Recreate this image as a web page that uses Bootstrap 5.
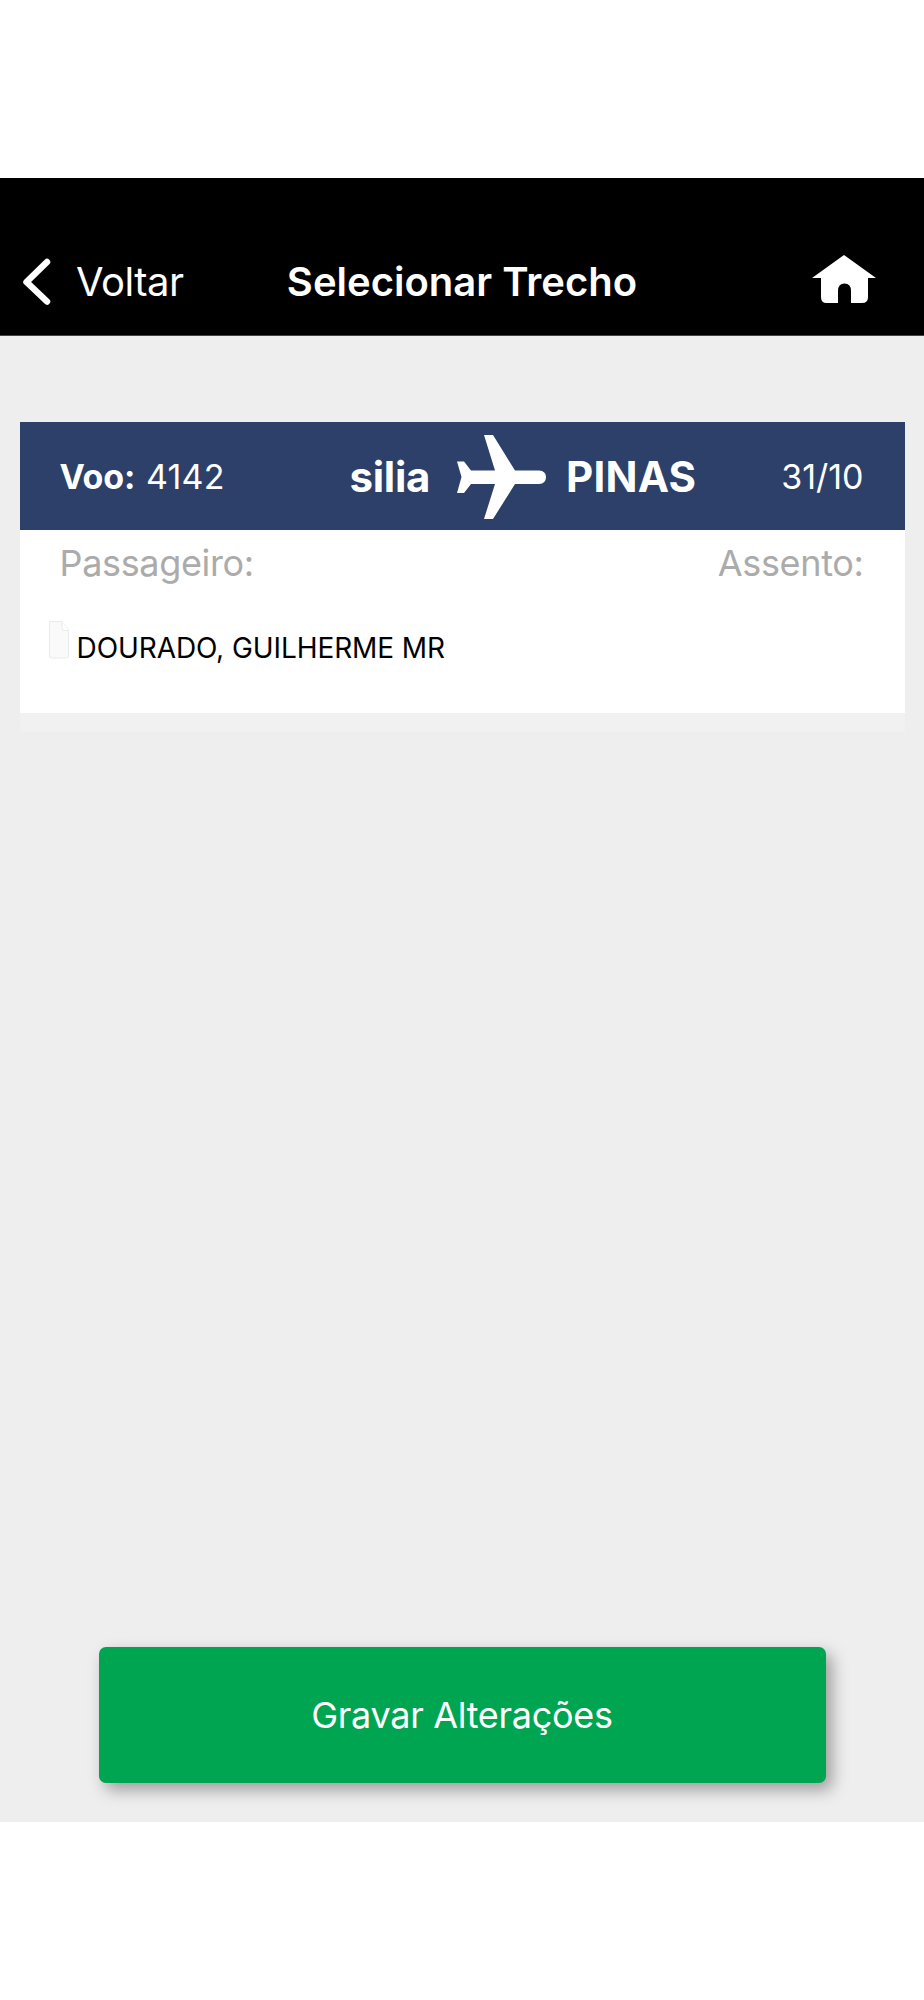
<!DOCTYPE html>
<html lang="pt-BR">
<head>
<meta charset="utf-8">
<meta name="viewport" content="width=device-width, initial-scale=1">
<title>Selecionar Trecho</title>
<link href="https://cdn.jsdelivr.net/npm/bootstrap@5.3.0/dist/css/bootstrap.min.css" rel="stylesheet">
<style>
body{font-family:Inter,"Liberation Sans",sans-serif;background:#fff;line-height:1}
.app-screen{margin-top:178px;height:1644px;background:#eee}
.app-bar{height:158px;background:#000;border-bottom:1px solid #444;padding-top:50px}
.app-bar .bar-row{height:107px}
.bar-side{width:287px}
.back-link{font-size:40px;gap:25px;letter-spacing:-.5px;padding-left:22px}
.home-link{padding:0 48px 6px 0}
.bar-title{font-size:40px;font-weight:600;white-space:nowrap}
.flight-card{margin:86px 19.5px 0;height:310px;background:#f1f1f1}
.flight-head{height:108px;background:#2c4069;padding:1px 41px 0 40px;font-size:34px}
.flight-no{width:290px;gap:11px}
.flight-no b{letter-spacing:-.2px}
.flight-no span{letter-spacing:.2px}
.route{font-size:42px;font-weight:700}
.route-from{letter-spacing:-.3px}
.route-to{letter-spacing:.2px}
.route svg{margin:0 20px 0 27px}
.flight-body{height:183px;background:#fff;padding:15px 41px 0 29px}
.labels{font-size:36px;line-height:37px;letter-spacing:-.35px;color:#ababab;padding-left:11px}
.passenger{margin-top:39px;color:#000;font-size:28px;letter-spacing:-.08px;gap:7px}
.passenger span{padding-top:13px}
.save-btn{--bs-btn-border-radius:7px;width:727px;height:136px;margin-bottom:39px;background:#00a551;color:#fff;border:0;font-size:36px;letter-spacing:-.3px;box-shadow:6px 7px 16px rgba(0,0,0,.34)}
</style>
</head>
<body>
<main class="app-screen d-flex flex-column">
  <header class="app-bar text-white">
    <div class="bar-row d-flex align-items-center justify-content-between">
      <a class="bar-side back-link d-flex align-items-center text-white text-decoration-none" href="#">
        <svg width="29" height="48" viewBox="0 0 29 48" fill="none" stroke="#fff" stroke-width="6.500" stroke-linecap="round" stroke-linejoin="round"><path d="M25 4 L4.500 24 L25 43.500"/></svg>
        <span>Voltar</span>
      </a>
      <span class="bar-title">Selecionar Trecho</span>
      <a class="bar-side home-link d-flex justify-content-end" href="#" aria-label="Início">
        <svg width="64" height="48" viewBox="0 0 64 48" fill="#fff"><path d="M32 0 L64 23 H56 V42 Q56 48 50 48 H39 V36 Q39 28.500 32.500 28.500 Q26 28.500 26 36 V48 H14.500 Q9 48 9 42 V23 H0 Z"/></svg>
      </a>
    </div>
  </header>
  <section class="flight-card">
    <div class="flight-head d-flex align-items-center text-white">
      <div class="flight-no d-flex"><b>Voo:</b><span>4142</span></div>
      <div class="route d-flex align-items-center">
        <span class="route-from">silia</span>
        <svg width="89" height="84" viewBox="0 0 89 84" fill="#fff"><path d="M27 0 H36 L58 35.500 H82 Q89 36 89 42 Q89 48.500 82 49 H58 L36 84 H27 L38 49 H14 L7 58 H0 L4.500 42 L0 26.500 H7 L14 35.500 H38 Z"/></svg>
        <span class="route-to">PINAS</span>
      </div>
      <span class="ms-auto">31/10</span>
    </div>
    <div class="flight-body">
      <div class="labels d-flex justify-content-between"><span>Passageiro:</span><span>Assento:</span></div>
      <div class="passenger d-flex">
        <svg width="21" height="38" viewBox="0 0 21 38" fill="#fafafa" stroke="#ebebeb"><path d="M.5 .5 H13 L19.500 9 V35 Q19.500 37 17.500 37 H2.500 Q.5 37 .5 35 Z"/><path fill="#fff" d="M13 .5 V7 Q13 9.500 15.500 9.500 H19.500"/></svg>
        <span>DOURADO, GUILHERME MR</span>
      </div>
    </div>
  </section>
  <button class="btn save-btn mt-auto mx-auto" type="button">Gravar Alterações</button>
</main>
<script src="https://cdn.jsdelivr.net/npm/bootstrap@5.3.0/dist/js/bootstrap.bundle.min.js"></script>
</body>
</html>
